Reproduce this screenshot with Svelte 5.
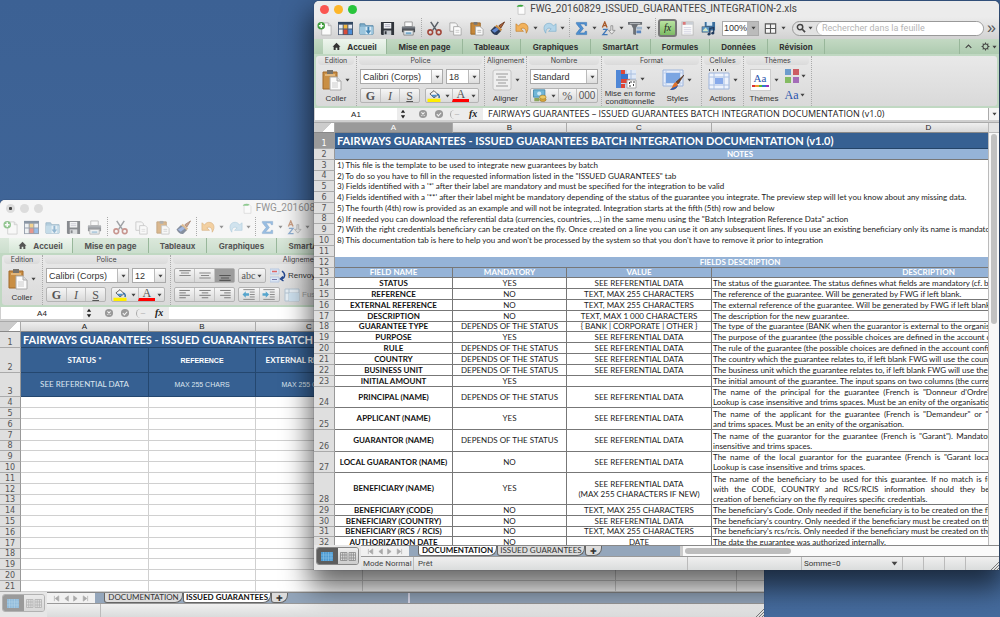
<script>
  const tabs = [
    { label: "Accueil", width: 64 },
    { label: "Mise en page", width: 76 },
    { label: "Tableaux", width: 58 },
    { label: "Graphiques", width: 70 },
    { label: "SmartArt", width: 60 },
    { label: "Formules", width: 59 },
    { label: "Données", width: 58 },
    { label: "Révision", width: 57 }
  ];

  const title = "FAIRWAYS GUARANTEES - ISSUED GUARANTEES BATCH INTEGRATION DOCUMENTATION (v1.0)";
  const ref = "SEE REFERENTIAL DATA";
  const depends = "DEPENDS OF THE STATUS";
  const text255 = "TEXT, MAX 255 CHARACTERS";

  const notes = [
    { h: 11, text: "1) This file is the template to be used to integrate new guarantees by batch" },
    { h: 10, text: '2) To do so you have to fill in the requested information listed in the "ISSUED GUARANTEES" tab' },
    { h: 11, text: "3) Fields identified with a '*' after their label are mandatory and must be specified for the integration to be valid" },
    { h: 11, text: "4) Fields identified with a '**' after their label might be mandatory depending of the status of the guarantee you integrate. The preview step will let you know about any missing data." },
    { h: 11, text: "5) The fourth (4th) row is provided as an example and will not be integrated. Integration starts at the fifth (5th) row and below" },
    { h: 10, text: '6) If needed you can download the referential data (currencies, countries, ...) in the same menu using the "Batch Integration Reference Data" action' },
    { h: 11, text: "7) With the right credentials beneficiary can be created on the fly. Once created on a line you can use it on any subsequent lines. If you use an existing beneficiary only its name is mandatory" },
    { h: 11, text: "8) This documentation tab is here to help you and won't be processed by the system so that you don't have to remove it prior to integration" },
    { h: 11, text: "" }
  ];

  const fields = [
    { h: 11, name: "STATUS", must: "YES", value: [ref], desc: ["The status of the guarantee. The status defines what fields are mandatory (cf. below)."] },
    { h: 11, name: "REFERENCE", must: "NO", value: [text255], desc: ["The reference of the guarantee. Will be generated by FWG if left blank."] },
    { h: 11, name: "EXTERNAL REFERENCE", must: "NO", value: [text255], desc: ["The external reference of the guarantee. Will be generated by FWG if left blank."] },
    { h: 11, name: "DESCRIPTION", must: "NO", value: ["TEXT, MAX 1 000 CHARACTERS"], desc: ["The description for the new guarantee."] },
    { h: 10, name: "GUARANTEE TYPE", must: depends, value: ["{ BANK | CORPORATE | OTHER }"], desc: ["The type of the guarantee (BANK when the guarantor is external to the organisation)."] },
    { h: 11, name: "PURPOSE", must: "YES", value: [ref], desc: ["The purpose of the guarantee (the possible choices are defined in the account configuration)."] },
    { h: 11, name: "RULE", must: depends, value: [ref], desc: ["The rule of the guarantee (the possible choices are defined in the account configuration)."] },
    { h: 11, name: "COUNTRY", must: depends, value: [ref], desc: ["The country which the guarantee relates to, if left blank FWG will use the country of the applicant."] },
    { h: 11, name: "BUSINESS UNIT", must: depends, value: [ref], desc: ["The business unit which the guarantee relates to, if left blank FWG will use the default one."] },
    { h: 11, name: "INITIAL AMOUNT", must: "YES", value: [""], desc: ["The initial amount of the guarantee. The input spans on two columns (the currency and the amount)."] },
    { h: 21, name: "PRINCIPAL (NAME)", must: depends, value: [ref], desc: ['The name of the principal for the guarantee (French is "Donneur d\'Ordre"). Mandatory if the guarantor is external.', "Lookup is case insensitive and trims spaces. Must be an enity of the organisation."] },
    { h: 22, name: "APPLICANT (NAME)", must: "YES", value: [ref], desc: ['The name of the applicant for the guarantee (French is "Demandeur" or "Postulant"). The lookup is case insensitive', "and trims spaces. Must be an enity of the organisation."] },
    { h: 22, name: "GUARANTOR (NAME)", must: depends, value: [ref], desc: ['The name of the guarantor for the guarantee (French is "Garant"). Mandatory if the type is BANK. The lookup is case', "insensitive and trims spaces."] },
    { h: 21, name: "LOCAL GUARANTOR (NAME)", must: "NO", value: [ref], desc: ['The name of the local guarantor for the guarantee (French is "Garant local"). Only needed when this one is known.', "Lookup is case insensitive and trims spaces."] },
    { h: 32, name: "BENEFICIARY (NAME)", must: "YES", value: [ref, "(MAX 255 CHARACTERS IF NEW)"], desc: ["The name of the beneficiary to be used for this guarantee. If no match is found a new one will be created on the fly", "with the CODE, COUNTRY and RCS/RCIS information should they be provided in the same row. Note that", "creation of beneficiary on the fly requires specific credentials."] },
    { h: 11, name: "BENEFICIARY (CODE)", must: "NO", value: [text255], desc: ["The beneficiary's Code. Only needed if the beneficiary is to be created on the fly."] },
    { h: 11, name: "BENEFICIARY (COUNTRY)", must: "NO", value: [ref], desc: ["The beneficiary's country. Only needed if the beneficiary must be created on the fly."] },
    { h: 10, name: "BENEFICIARY (RCS / RCIS)", must: "NO", value: [text255], desc: ["The beneficiary's rcs/rcis. Only needed if the beneficiary must be created on the fly."] },
    { h: 11, name: "AUTHORIZATION DATE", must: "NO", value: ["DATE"], desc: ["The date the guarantee was authorized internally."] }
  ];

  const docCols = [118, 114, 145, 434];
  const issuedCols = [128, 107, 107, 253, 121, 120];
  const emptyRows = Array.from({ length: 18 }, (_, i) => ({ n: i + 4, h: i % 5 === 4 ? 10 : 11 }));

  const letter = (i) => String.fromCharCode(65 + i);
  const total = (cols) => cols.reduce((a, b) => a + b, 21);
</script>

{#snippet caret()}
  <svg class="caret" viewBox="0 0 6 4" aria-hidden="true"><path d="M0.5 0.5h5L3 3.8z" /></svg>
{/snippet}

{#snippet icon(name)}
  <svg class="icon" viewBox="0 0 16 16" aria-hidden="true">
    {#if name === "new"}
      <path d="M5 2h7l3 3v10H5z" fill="#fbfbfb" stroke="#b5b5b5" />
      <path d="M12 2v3h3" fill="#ddd" stroke="#b5b5b5" />
      <circle cx="4.500" cy="5" r="4" fill="#3f9c3c" />
      <path d="M4.500 2.500v5M2 5h5" stroke="#fff" stroke-width="1.600" />
    {:else if name === "gallery"}
      <rect x="0" y="1" width="16" height="14" fill="#4a5a72" />
      <rect x="0" y="1" width="16" height="2" fill="#2f455f" />
      <path d="M1 4h4v4H1zM1 9h4v5H1z" fill="#e9edf2" />
      <path d="M6 4h4v4H6z" fill="#f2b63c" /><path d="M11 4h4v4h-4z" fill="#e3e9f2" />
      <path d="M6 9h4v5H6z" fill="#d94b3a" /><path d="M11 9h4v5h-4z" fill="#4f8fd9" />
    {:else if name === "open"}
      <path d="M1 3h5l1 2h8v9H1z" fill="#7faecb" stroke="#5b8aa9" />
      <path d="M1 6h14v8H1z" fill="#9cc5dd" />
      <path d="M7 6h6v8H7z" fill="#f5fafd" opacity=".7" />
      <path d="M9 6h2v4h2l-3 4-3-4h2z" fill="#4485b4" />
    {:else if name === "save"}
      <path d="M1 1h14v14H2l-1-1z" fill="#30343b" />
      <path d="M4 2h8v6H4z" fill="#f3f5f7" /><path d="M5 4h6M5 6h6" stroke="#aab" />
      <path d="M4 10h8v5H4z" fill="#c5c9ce" /><path d="M5 11h2v3H5z" fill="#30343b" />
    {:else if name === "print"}
      <path d="M4 1h8v5H4z" fill="#fafafa" stroke="#999" />
      <path d="M1 6h14v6H1z" fill="#4b4f55" /><path d="M1 6h14v2H1z" fill="#767b82" />
      <path d="M3 10h10v5H3z" fill="#e9eef2" stroke="#888" /><path d="M5 12h6v2H5z" fill="#79a9c9" />
    {:else if name === "cut"}
      <path d="M4 1l6 9M12 1L6 10" stroke="#5a5f66" stroke-width="1.600" />
      <circle cx="3.500" cy="12" r="2.500" fill="none" stroke="#a2473b" stroke-width="1.700" />
      <circle cx="12.500" cy="12" r="2.500" fill="none" stroke="#a2473b" stroke-width="1.700" />
    {:else if name === "copy"}
      <path d="M2 2h6l2 2v7H2z" fill="#f6f6f6" stroke="#aaa" />
      <path d="M6 6h6l2 2v7H6z" fill="#fcfcfc" stroke="#aaa" />
      <path d="M8 10h4M8 12h4" stroke="#ccc" />
    {:else if name === "paste"}
      <path d="M2 2h10v12H2z" fill="#c5873a" stroke="#9c6626" />
      <path d="M5 1h4v3H5z" fill="#777" />
      <path d="M7 6h5l3 3v6H7z" fill="#fafafa" stroke="#aaa" /><path d="M9 10h4M9 12h4" stroke="#bbb" />
    {:else if name === "brush"}
      <path d="M15.500 1l-6 4 2 2.500z" fill="#b0643a" stroke="#6d3b20" />
      <path d="M7 4l6 5-2 2.500-6-5z" fill="#c98d45" />
      <path d="M5 5.500l6.500 5.500-4 4c-3 .5-5.500-2-7-5z" fill="#2c3b58" /><path d="M2 10l5-3 2.500 2L5 12.500z" fill="#5f86cf" />
    {:else if name === "undo"}
      <path d="M1 3v8h8L6.200 8.400C9 6.500 12 8 12 13c4-6 1-11-4-10.500-1.700.2-3 .9-4.200 2.700z" fill="#f2b25c" stroke="#c07d29" stroke-width=".7" />
    {:else if name === "redo"}
      <path d="M15 3v8H7l2.800-2.600C7 6.500 4 8 4 13 0 7 3 2 8 2.500c1.700.2 3 .9 4.200 2.700z" fill="#b3d5e9" stroke="#7fb0cd" stroke-width=".7" />
    {:else if name === "sum"}
      <path d="M2.500 1.500h11v3.500h-1.500l-.8-1.700H6.500L10 8l-4 4.700h5.200l.8-1.700h1.500v3.500h-11V13l4-5-4-5z" fill="#4d8fd1" stroke="#2c69a8" stroke-width=".5" />
    {:else if name === "sort"}
      <path d="M1.500 7L4 1l2.500 6M2.500 5h3" fill="none" stroke="#a85a2a" stroke-width="1.400" />
      <path d="M2 9h4.500L2 14.500h5" fill="none" stroke="#3f77b8" stroke-width="1.400" />
      <path d="M10.500 5h2v5h2.500l-3.500 4L8 10h2.500z" fill="#e8e8e8" stroke="#777" stroke-width=".7" />
    {:else if name === "filter"}
      <path d="M0 1h15v3h-4.500l-2 4v7l-3-1V8l-2-4H0z" fill="#6c7075" /><path d="M2 2h11v1H2z" fill="#c8ccd0" />
      <path d="M9 6h6v3H9z" fill="#9fb5cc" /><path d="M9 10h5v3H9z" fill="#5a85bf" />
    {:else if name === "toolbox"}
      <rect x="2" y="1" width="12" height="14" fill="#fafafa" stroke="#bbb" />
      <path d="M2 1h12v3H2z" fill="#c9ced4" /><path d="M3 1h3v3H3z" fill="#d77" />
      <path d="M4 7h8M4 9h8M4 11h8M4 13h8" stroke="#ccd" stroke-width=".8" />
    {:else if name === "media"}
      <path d="M4 1h11v9H4z" fill="#3b6f9e" /><path d="M6 1h6v4H6z" fill="#d8e7f3" />
      <path d="M1 6h8v6H1z" fill="#5c96c6" stroke="#345" stroke-width=".5" /><path d="M2 10l3-3 3 4H2z" fill="#d5e9c8" />
      <path d="M9.500 14V8l4-1v6" fill="none" stroke="#213a5e" stroke-width="1.300" />
      <circle cx="8.500" cy="14" r="1.500" fill="#213a5e" /><circle cx="12.500" cy="13" r="1.500" fill="#213a5e" />
    {:else if name === "grid"}
      <path d="M2.500 3h11v10h-11zM8 3v10M2.500 8h11" fill="#f6f6f6" stroke="#555" stroke-width="1.200" />
    {:else if name === "home"}
      <path d="M8 1.500L1 8.500h2V14h3.500v-4h3v4H13V8.500h2z" fill="currentColor" />
    {:else if name === "gear"}
      <circle cx="8" cy="8" r="4.500" fill="none" stroke="#444" stroke-width="1.800" />
      <path d="M8 1v2.500M8 12.500V15M1 8h2.500M12.500 8H15M3 3l1.800 1.800M11.200 11.200L13 13M3 13l1.800-1.800M11.200 4.800L13 3" stroke="#444" stroke-width="1.800" />
    {:else if name === "up"}
      <path d="M3 10.500l5-5 5 5" fill="none" stroke="#444" stroke-width="2" />
    {:else if name === "search"}
      <circle cx="6.500" cy="6.500" r="4.300" fill="none" stroke="#444" stroke-width="2.400" />
      <path d="M10 10l4.500 4.500" stroke="#444" stroke-width="2.800" />
    {:else if name === "cancel"}
      <circle cx="8" cy="8" r="6.500" fill="#999" /><path d="M5.500 5.500l5 5M10.500 5.500l-5 5" stroke="#f2f2f2" stroke-width="1.700" />
    {:else if name === "check"}
      <circle cx="8" cy="8" r="6.500" fill="#999" /><path d="M4.500 8l2.500 3 4.500-5" fill="none" stroke="#f2f2f2" stroke-width="1.700" />
    {:else if name === "step"}
      <path d="M8 1l3.500 5h-7zM4.500 10h7L8 15z" fill="#222" />
    {:else if name === "fill"}
      <path d="M3 6l5-4 5 5-5 4z" fill="#f5f5f5" stroke="#444" /><path d="M4 7h8l-4 3.500z" fill="#4c8fcb" />
      <path d="M12 6c2 1 3 3 2 5" fill="none" stroke="#2c6aa6" stroke-width="1.700" />
      <path d="M0 12h16v4H0z" fill="#ffee00" />
    {:else if name === "left"}
      <path d="M1 3h13M1 6h8M1 9h13M1 12h8" stroke="#777" stroke-width="1.200" />
    {:else if name === "center"}
      <path d="M1 3h14M4 6h8M1 9h14M4 12h8" stroke="#777" stroke-width="1.200" />
    {:else if name === "right"}
      <path d="M2 3h13M7 6h8M2 9h13M7 12h8" stroke="#777" stroke-width="1.200" />
    {:else if name === "top"}
      <path d="M1 2h14M3 5h10M1 8h14" stroke="#888" stroke-width="1.300" />
    {:else if name === "middle"}
      <path d="M1 5h14M3 8h10M1 11h14" stroke="#888" stroke-width="1.300" />
    {:else if name === "bottom"}
      <path d="M1 8h14M3 11h10M1 14h14" stroke="#555" stroke-width="1.300" />
    {:else if name === "outdent" || name === "indent"}
      <path d="M1 2h14M9 5h6M9 8h6M9 11h6M1 14h14" stroke="#777" />
      {#if name === "outdent"}
        <path d="M0 8l4-4v2.500h4v3H4V12z" fill="#56a5cd" />
      {:else}
        <path d="M8 8L4 4v2.500H0v3h4V12z" fill="#56a5cd" />
      {/if}
    {:else if name === "wrap"}
      <path d="M0 1h9v5H0zM0 9h9v5H0z" fill="#dbe6f5" stroke="#b8c8e0" />
      <path d="M2 3.500h5" stroke="#d66" stroke-width="1.300" /><path d="M2 11.500h5" stroke="#77a" />
      <path d="M12 3c4 3 3 7 0 8M13 8.500L10.500 11l3 2" fill="none" stroke="#24488f" stroke-width="1.500" />
    {:else if name === "merge"}
      <path d="M1 2h14v12H1z" fill="#e8f0f6" stroke="#b4c5d3" /><path d="M1 6h14M5 2v12" stroke="#b4c5d3" />
      <path d="M5 6h10v8H5z" fill="#cfe2f0" />
    {:else if name === "money"}
      <path d="M0 1h14v9H0z" fill="#71b7d8" stroke="#3d84a8" /><circle cx="7" cy="5.500" r="2.500" fill="#cfeaf6" />
      <ellipse cx="11.500" cy="13" rx="4" ry="2.500" fill="#d5a53c" stroke="#8c671b" stroke-width=".6" />
      <ellipse cx="11.500" cy="10" rx="4" ry="2.500" fill="#edc964" stroke="#8c671b" stroke-width=".6" />
      <path d="M1 11h6v4H1z" fill="#8ba55c" />
    {:else if name === "file"}
      <path d="M3 2h7l3 3v10H3z" fill="#fdfdfd" stroke="#b9b9b9" />
      <path d="M1 4c1-3 6-4 10-2L9 4H4z" fill="#3aa63c" />
    {/if}
  </svg>
{/snippet}

{#snippet tool(name, label, drop = false)}
  <button class="tool" class:drop aria-label={label}>
    {@render icon(name)}
    {#if drop}{@render caret()}{/if}
  </button>
{/snippet}

{#snippet picker(label, value, size)}
  <label class="picker {size}">
    <select aria-label={label}><option>{value}</option></select>
    <span class="arrow">{@render caret()}</span>
  </label>
{/snippet}

{#snippet clipboard()}
  <section class="group edition">
    <h2>Edition</h2>
    <div class="big-row">
      <button class="big">
        <span class="glyph">
          <svg viewBox="0 0 20 22" width="20" height="22" aria-hidden="true">
            <path d="M1 3h14v17H1z" fill="#c98f45" stroke="#a1692a" />
            <path d="M3 5h10v2H3z" fill="#e2b77c" /><path d="M5 1h6v4H5z" fill="#77736c" />
            <path d="M8 8h7l4 4v9H8z" fill="#fbfbfb" stroke="#aaa" /><path d="M15 8v4h4" fill="#ddd" stroke="#aaa" />
            <path d="M10 14h6M10 16h6M10 18h6" stroke="#ccc" />
          </svg>
          {@render caret()}
        </span>
        <span>Coller</span>
      </button>
    </div>
  </section>
{/snippet}

{#snippet police(size)}
  <section class="group police">
    <h2>Police</h2>
    <div class="line">
      {@render picker("Police", "Calibri (Corps)", "wide")}
      {@render picker("Taille", size, "small")}
    </div>
    <div class="line">
      <div class="segment gis">
        <button><b>G</b></button><button><i>I</i></button><button><u>S</u></button>
      </div>
      <div class="segment paint">
        <button aria-label="Remplissage">{@render icon("fill")}</button>
        <button class="thin" aria-label="Autres remplissages">{@render caret()}</button>
        <button class="ink">A</button>
        <button class="thin" aria-label="Autres couleurs">{@render caret()}</button>
      </div>
    </div>
  </section>
{/snippet}

{#snippet chrome(front)}
  <header class="titlebar">
    <div class="lights">
      <button class="red" aria-label="Fermer"></button>
      <button class="amber" aria-label="Réduire"></button>
      <button class="green" aria-label="Agrandir"></button>
    </div>
    <h1>{@render icon("file")}FWG_20160829_ISSUED_GUARANTEES_INTEGRATION-2.xls</h1>
  </header>

  <div class="toolbar">
    {@render tool("new", "Nouveau")}
    {@render tool("gallery", "Galerie")}
    {@render tool("open", "Ouvrir")}
    {@render tool("save", "Enregistrer")}
    {@render tool("print", "Imprimer")}
    <span class="sep"></span>
    {@render tool("cut", "Couper")}
    {@render tool("copy", "Copier")}
    {@render tool("paste", "Coller")}
    {@render tool("brush", "Reproduire")}
    <span class="sep"></span>
    {@render tool("undo", "Annuler", true)}
    {@render tool("redo", "Rétablir", true)}
    <span class="sep"></span>
    {@render tool("sum", "Somme", true)}
    {@render tool("sort", "Trier", true)}
    {@render tool("filter", "Filtrer", true)}
    <span class="sep"></span>
    <button class="fx">fx</button>
    {@render tool("toolbox", "Boîte à outils")}
    {@render tool("media", "Média")}
    {@render picker("Zoom", "100%", "zoom")}
    {@render tool("grid", "Affichage", true)}
    <label class="search">
      {@render icon("search")}{@render caret()}
      <input type="search" placeholder="Rechercher dans la feuille" aria-label="Rechercher" />
    </label>
    <span class="more">»</span>
  </div>

  <nav class="tabs">
    {#each tabs as tab, i}
      <button class:active={i === 0} style="width: {tab.width}px">
        {#if i === 0}{@render icon("home")}{/if}{tab.label}
      </button>
    {/each}
    <div class="tab-tools">
      {@render icon("up")}{@render icon("gear")}{@render caret()}
    </div>
  </nav>

  <div class="ribbon">
    <div class="panel">
      {@render clipboard()}
      {@render police(front ? "18" : "12")}
      {#if front}
        <section class="group align">
          <h2>Alignement</h2>
          <div class="big-row">
            <button class="big">
              <span class="glyph">
                <svg viewBox="0 0 20 22" width="20" height="22" aria-hidden="true">
                  <rect x="1" y="1" width="18" height="20" rx="2" fill="#efefef" stroke="#c4c4c4" />
                  <path d="M4 5h12M6 8h8M4 11h12M6 14h8M4 17h12" stroke="#999" />
                </svg>
                {@render caret()}
              </span>
              <span>Aligner</span>
            </button>
          </div>
        </section>
        <section class="group number">
          <h2>Nombre</h2>
          <div class="line">{@render picker("Format de nombre", "Standard", "standard")}</div>
          <div class="line">
            <div class="segment digits">
              <button aria-label="Monétaire">{@render icon("money")}</button>
              <button class="thin" aria-label="Autres devises">{@render caret()}</button>
              <button>%</button><button>000</button>
            </div>
          </div>
        </section>
        <section class="group format">
          <h2>Format</h2>
          <div class="big-row">
            <button class="big two-lines">
              <span class="glyph">
                <svg viewBox="0 0 22 20" width="22" height="20" aria-hidden="true">
                  <path d="M1 1h20v18H1z" fill="#dfe9f7" /><path d="M1 5h20M1 10h20M1 15h20M11 1v18M16 1v18" stroke="#a9bfe0" />
                  <path d="M1 1h5v18H1z" fill="#4f87d6" /><path d="M6 1h4v4H6zM6 10h9v4H6z" fill="#de4637" />
                  <path d="M6 5h7v5H6z" fill="#3a73cc" /><path d="M6 15h4v4H6z" fill="#de4637" />
                  <path d="M12 11h9v8h-9z" fill="#fff" stroke="#aaa" /><path d="M17 13h-2l-1 1 1 1M20 13h-2M14 17h2M18 15l1 1-1 1" stroke="#444" fill="none" />
                </svg>
                {@render caret()}
              </span>
              <span>Mise en forme<br />conditionnelle</span>
            </button>
            <button class="big">
              <span class="glyph">
                <svg viewBox="0 0 22 22" width="22" height="22" aria-hidden="true">
                  <path d="M1 1h20v16H1z" fill="#e6eefb" stroke="#9db4db" /><path d="M4 1v16M18 1v16M1 4h20M1 14h20" stroke="#bccdea" />
                  <path d="M4 4h14v10H4z" fill="#7ba5e2" />
                  <path d="M22 6l-8 7 2 2z" fill="#7b4a2a" stroke="#4a2a16" stroke-width=".6" />
                  <path d="M14 13l2 3c-1 4-4 5-8 5 3-2 2-6 6-8z" fill="#e0702a" /><path d="M10 19c2-1 4-1 6-3-1 4-4 5-8 5z" fill="#2d5db0" />
                </svg>
                {@render caret()}
              </span>
              <span>Styles</span>
            </button>
          </div>
        </section>
        <section class="group cells">
          <h2>Cellules</h2>
          <div class="big-row">
            <button class="big">
              <span class="glyph">
                <svg viewBox="0 0 22 22" width="22" height="22" aria-hidden="true">
                  <path d="M1 1h20" stroke="#555" stroke-width="2" stroke-dasharray="1 3" />
                  <path d="M1 4h20v16H1z" fill="#eef3fc" stroke="#9db4db" /><path d="M6 4v16M16 4v16M1 8h20M1 16h20" stroke="#aac0e4" />
                  <path d="M7 9h8v6H7z" fill="#86a9ea" />
                </svg>
                {@render caret()}
              </span>
              <span>Actions</span>
            </button>
          </div>
        </section>
        <section class="group themes">
          <h2>Thèmes</h2>
          <div class="big-row">
            <button class="big">
              <span class="glyph">
                <span class="theme-page">Aa<i class="dots"></i></span>
                {@render caret()}
              </span>
              <span>Thèmes</span>
            </button>
            <div class="theme-side">
              <button aria-label="Couleurs">
                <svg viewBox="0 0 14 14" width="14" height="14" aria-hidden="true">
                  <path d="M0 0h6v6H0z" fill="#6d9ccc" /><path d="M8 0h6v6H8z" fill="#cc5d64" />
                  <path d="M0 8h6v6H0z" fill="#84bb62" /><path d="M8 8h6v6H8z" fill="#a46cb8" />
                </svg>
                {@render caret()}
              </button>
              <button class="fonts">Aa{@render caret()}</button>
            </div>
          </div>
        </section>
      {:else}
        <section class="group align-wide">
          <h2>Alignement</h2>
          <div class="line">
            <div class="segment three">
              <button aria-label="Haut">{@render icon("top")}</button>
              <button aria-label="Milieu">{@render icon("middle")}</button>
              <button class="pressed" aria-label="Bas">{@render icon("bottom")}</button>
            </div>
            <div class="segment abc"><button>abc{@render caret()}</button></div>
            <button class="plain">{@render icon("wrap")}Renvoyer</button>
          </div>
          <div class="line">
            <div class="segment three">
              <button aria-label="Gauche">{@render icon("left")}</button>
              <button aria-label="Centre">{@render icon("center")}</button>
              <button aria-label="Droite">{@render icon("right")}</button>
            </div>
            <div class="segment two">
              <button aria-label="Diminuer le retrait">{@render icon("outdent")}</button>
              <button aria-label="Augmenter le retrait">{@render icon("indent")}</button>
            </div>
            <button class="plain" disabled>{@render icon("merge")}Fusionner</button>
          </div>
        </section>
      {/if}
    </div>
  </div>

  <div class="formula">
    <input class="name-box" value={front ? "A1" : "A4"} aria-label="Zone de nom" />
    <div class="formula-tools">
      {@render icon("step")}{@render icon("cancel")}{@render icon("check")}
      <span class="pill">–</span>
      <i>fx</i>
    </div>
    <input class="formula-text" value={front ? title.replace("-", "–") : ""} aria-label="Formule" />
    <span class="formula-drop">{@render caret()}</span>
  </div>
{/snippet}

{#snippet columns(cols, selected)}
  <colgroup>
    <col class="head-col" />
    {#each cols as width}<col style="width: {width}px" />{/each}
  </colgroup>
  <thead>
    <tr>
      <td class="corner"></td>
      {#each cols as _, i}<th class:selected={i === selected}>{letter(i)}</th>{/each}
    </tr>
  </thead>
{/snippet}

{#snippet bottom(front)}
  <footer>
    <div class="views">
      <button class="on" aria-label="Mode Normal">
        <svg viewBox="0 0 12 9" width="12" height="9" aria-hidden="true"><path d="M0 0h12v9H0z" fill="#4e9bd3" /><path d="M2.500 0v9M5 0v9M7.500 0v9M10 0v9M0 3h12M0 6h12" stroke="#8cc3e8" stroke-width=".6" /></svg>
      </button>
      <button aria-label="Mode Page">
        <svg viewBox="0 0 16 9" width="16" height="9" aria-hidden="true"><path d="M.5 .5h6.500v8H.5zM9 .5h6.500v8H9zM2.700 .5v8M4.900 .5v8M11.200 .5v8M13.400 .5v8M.5 3h6.500M.5 6h6.500M9 3h6.500M9 6h6.500" fill="#ddd" stroke="#888" stroke-width=".8" /></svg>
      </button>
    </div>
    <div class="sheets">
      <div class="arrows">
        <svg viewBox="0 0 42 8" width="40" height="7" aria-hidden="true">
          <path d="M2 1v6M7 1L3 4l4 3zM18 1l-4 3 4 3zM24 1l4 3-4 3zM35 1l4 3-4 3zM40 1v6" fill="#aaa" stroke="#aaa" stroke-width=".8" />
        </svg>
      </div>
      <button class="sheet first" class:current={front}>DOCUMENTATION</button>
      <button class="sheet" class:current={!front}>ISSUED GUARANTEES</button>
      <button class="sheet plus">✚</button>
      {#if front}
        <div class="hscroll"><span></span></div>
      {:else}
        <span class="notch"></span>
      {/if}
    </div>
    <div class="status">
      {#if front}
        <span class="mode">Mode Normal</span>
        <span class="ready">Prêt</span>
        <span class="spare"></span>
        <span class="sum">Somme=0{@render caret()}</span>
        <span class="cell"></span><span class="cell"></span><span class="cell"></span>
        <span class="cell last"></span>
      {:else}
        <span class="mode"></span>
      {/if}
      <svg class="grip" viewBox="0 0 8 8" width="8" height="8" aria-hidden="true"><path d="M0 8l8-8M3 8l5-5M6 8l2-2" stroke="#777" /></svg>
    </div>
  </footer>
{/snippet}

<main class="desktop">
  <div class="window back">
    {@render chrome(false)}
    <div class="sheet-area">
      <div class="cells-view">
        <table style="width: {total(issuedCols)}px">
          {@render columns(issuedCols, -1)}
          <tbody>
            <tr class="title"><th class="row">1</th><td colspan="6">{title}</td></tr>
            <tr class="names">
              <th class="row">2</th>
              <td>STATUS *</td><td class="alt">REFERENCE</td><td>EXTERNAL REFERENCE</td><td></td><td></td><td></td>
            </tr>
            <tr class="hints">
              <th class="row">3</th>
              <td>SEE REFERENTIAL DATA</td><td class="alt">MAX 255 CHARS</td><td class="alt">MAX 255 CHARS</td><td></td><td></td><td></td>
            </tr>
            {#each emptyRows as row}
              <tr class="empty" style="height: {row.h}px">
                <th class="row">{row.n}</th>
                {#each issuedCols as _}<td></td>{/each}
              </tr>
            {/each}
          </tbody>
        </table>
      </div>
    </div>
    {@render bottom(false)}
  </div>

  <div class="window front">
    {@render chrome(true)}
    <div class="sheet-area">
      <div class="cells-view">
        <table style="width: {total(docCols)}px">
          {@render columns(docCols, 0)}
          <tbody>
            <tr class="title"><th class="row selected">1</th><td colspan="4">{title}</td></tr>
            <tr class="band"><th class="row">2</th><td colspan="4">NOTES</td></tr>
            {#each notes as note, i}
              <tr class="note" style="height: {note.h}px"><th class="row">{i + 3}</th><td colspan="4">{note.text}</td></tr>
            {/each}
            <tr class="band"><th class="row">12</th><td colspan="4">FIELDS DESCRIPTION</td></tr>
            <tr class="band tight">
              <th class="row">13</th><td>FIELD NAME</td><td>MANDATORY</td><td>VALUE</td><td>DESCRIPTION</td>
            </tr>
            {#each fields as field, i}
              <tr class="field" style="height: {field.h}px">
                <th class="row">{i + 14}</th>
                <td class="name">{field.name}</td>
                <td>{field.must}</td>
                <td>{#each field.value as text}<p>{text}</p>{/each}</td>
                <td class="desc">{#each field.desc as text}<p>{text}</p>{/each}</td>
              </tr>
            {/each}
          </tbody>
        </table>
      </div>
      <div class="vscroll"><i></i><span></span></div>
    </div>
    {@render bottom(true)}
  </div>
</main>

<style>
  :global(body) {
    margin: 0;
  }
  .desktop {
    position: relative;
    height: 100vh;
    overflow: hidden;
    background: linear-gradient(#3c6194, #456b9d);
    font-family: "Liberation Sans", sans-serif;
    font-size: 8px;
    color: #222;
  }
  button,
  input,
  select {
    margin: 0;
    padding: 0;
    border: 0;
    background: none;
    font: inherit;
    color: inherit;
    min-width: 0;
    outline: 0;
    white-space: nowrap;
    box-sizing: border-box;
  }
  h1,
  h2,
  p {
    margin: 0;
    font-weight: normal;
  }
  .icon {
    width: 16px;
    height: 16px;
    flex: none;
  }
  .caret {
    width: 5px;
    height: 4px;
    flex: none;
    fill: #444;
  }

  /* windows */
  .window {
    position: absolute;
    display: flex;
    flex-direction: column;
    border-radius: 5px 5px 0 0;
    overflow: hidden;
    background: #dcdcdc;
  }
  .back {
    top: 200px;
    left: 0;
    bottom: 0;
    width: 764px;
    box-shadow: 0 0 1px #223;
  }
  .front {
    top: 1px;
    right: 1px;
    bottom: 47px;
    left: 314px;
    box-shadow: 0 0 1px #223, 0 14px 28px 4px rgba(0, 0, 0, 0.6);
  }

  .titlebar {
    flex: none;
    display: grid;
    grid-template-columns: 50px 1fr 50px;
    align-items: center;
    height: 16px;
    background: #ececec;
  }
  .lights {
    display: flex;
    gap: 5px;
    padding-left: 6px;
  }
  .lights button {
    width: 9px;
    height: 9px;
    border-radius: 50%;
  }
  .red { background: #fb5651; }
  .amber { background: #fdb629; }
  .green { background: #29c53c; }
  .titlebar h1 {
    display: flex;
    justify-content: center;
    align-items: center;
    gap: 3px;
    font: 10px/12px Roboto, sans-serif;
    color: #444;
  }
  .titlebar .icon {
    width: 11px;
    height: 11px;
  }

  .toolbar {
    flex: none;
    display: flex;
    align-items: center;
    height: 22px;
    background: linear-gradient(#ececec, #d2d2d2);
    overflow: hidden;
  }
  .tool {
    flex: none;
    display: flex;
    align-items: center;
    justify-content: center;
    width: 21px;
    height: 20px;
  }
  .tool.drop {
    width: 27px;
    gap: 3px;
  }
  .tool .icon {
    width: 15px;
    height: 15px;
  }
  .sep {
    flex: none;
    align-self: stretch;
    width: 1px;
    margin: 1px 2px 2px;
    border-left: 1px dotted #aaa;
    box-sizing: border-box;
  }
  .fx {
    flex: none;
    width: 19px;
    height: 18px;
    border: 2px solid #777;
    border-radius: 3px;
    background: linear-gradient(#b9e3a0, #7dbb65);
    font: italic 10px/12px "Liberation Serif", serif;
  }
  .picker {
    flex: none;
    display: flex;
    height: 15px;
    border: 1px solid #aaa;
    background: #fff;
    box-sizing: border-box;
  }
  .picker select {
    flex: 1;
    appearance: none;
    padding-left: 2px;
    font-size: 9px;
    color: #333;
  }
  .arrow {
    display: flex;
    align-items: center;
    justify-content: center;
    width: 10px;
    border-left: 1px solid #bbb;
    background: linear-gradient(#fff, #ddd);
  }
  .zoom { width: 37px; margin: 0 2px 0 3px; }
  .zoom .arrow { background: #bbb; }
  .zoom select { padding-left: 1px; }
  .wide { width: 83px; }
  .small { width: 34px; }
  .standard { width: 68px; }
  .search {
    flex: 1;
    display: flex;
    align-items: center;
    height: 15px;
    margin-left: 4px;
    padding-left: 3px;
    gap: 2px;
    border: 1px solid #999;
    border-radius: 8px;
    background: #e2e2e2;
    box-sizing: border-box;
  }
  .search .icon {
    width: 10px;
    height: 10px;
  }
  .search input {
    flex: 1;
    height: 13px;
    margin-left: 1px;
    padding-left: 5px;
    border-left: 1px solid #aaa;
    border-radius: 7px;
    background: #fff;
    font: 9px/13px Roboto, sans-serif;
    appearance: none;
  }
  .search input::placeholder {
    color: #b5b5b5;
  }
  .more {
    width: 15px;
    text-align: center;
    font-size: 16px;
    line-height: 16px;
    color: #555;
  }

  .tabs {
    flex: none;
    display: flex;
    height: 15px;
    padding-left: 9px;
    background: linear-gradient(#c3d9c3, #aecbb0);
    overflow: hidden;
  }
  .tabs button {
    flex: none;
    display: flex;
    align-items: center;
    justify-content: center;
    gap: 6px;
    border-right: 1px solid #98b79a;
    font: bold 8px/14px Inter, sans-serif;
    color: #333;
  }
  .tabs .active {
    background: linear-gradient(#eef5ee, #d5e6d6);
  }
  .tabs .icon {
    width: 9px;
    height: 9px;
  }
  .tab-tools {
    display: flex;
    align-items: center;
    gap: 2px;
    margin-left: auto;
    padding: 0 2px 0 4px;
    border-left: 1px solid #98b79a;
  }
  .tab-tools .icon:nth-child(2) {
    margin-left: 6px;
  }

  .ribbon {
    flex: none;
    height: 54px;
    padding: 2px;
    background: #c0d8c2;
    box-sizing: border-box;
  }
  .panel {
    display: flex;
    height: 50px;
    border-radius: 3px;
    background: linear-gradient(#e9e9e9, #d9d9d9);
    overflow: hidden;
  }
  .group {
    flex: none;
    border-right: 1px dotted #aaa;
    box-sizing: border-box;
    color: #333;
  }
  .group h2 {
    height: 9px;
    margin: 0 2px 4px;
    border-radius: 4px;
    background: linear-gradient(#eaeaea, #dadada);
    font: 7px/9px Inter, sans-serif;
    text-align: center;
    color: #444;
  }
  .edition { width: 41px; }
  .police { width: 128px; }
  .align { width: 42px; }
  .number { width: 75px; }
  .format { width: 100px; }
  .cells { width: 42px; }
  .themes { width: 68px; }
  .align-wide { width: 262px; }
  .line {
    display: flex;
    gap: 3px;
    height: 15px;
    margin: 0 0 4px 3px;
  }
  .line + .line {
    gap: 5px;
  }
  .align-wide .line {
    gap: 3px;
  }
  .segment {
    display: flex;
    height: 15px;
    border: 1px solid #b4b4b4;
    border-radius: 2px;
    background: linear-gradient(#f6f6f6, #d9d9d9);
    box-sizing: border-box;
  }
  .segment button {
    flex: 1;
    display: flex;
    align-items: center;
    justify-content: center;
    border-left: 1px solid #c3c3c3;
    font: 12px/12px "Liberation Serif", serif;
    color: #555;
  }
  .segment button:first-child {
    border-left: 0;
  }
  .segment .thin {
    flex: 0 0 9px;
    border-left: 0;
  }
  .segment .icon {
    width: 14px;
    height: 13px;
  }
  .segment .pressed {
    background: #9c9c9c;
  }
  .gis { width: 60px; }
  .paint { width: 54px; }
  .segment .ink {
    border-bottom: 3px solid #f00;
    line-height: 9px;
  }
  .digits { width: 68px; }
  .digits button:last-child {
    flex: 0 0 21px;
    font: 10px/12px "Liberation Sans", sans-serif;
  }
  .three { width: 61px; }
  .segment.abc { width: 28px; }
  .two { width: 42px; }
  .segment.abc button {
    gap: 2px;
    font-size: 10px;
  }
  .plain {
    display: flex;
    align-items: center;
    gap: 2px;
    margin-left: 1px;
  }
  .plain:disabled {
    color: #999;
  }
  .big-row {
    display: flex;
    justify-content: center;
    align-items: flex-start;
  }
  .big {
    display: flex;
    flex-direction: column;
    align-items: center;
    gap: 4px;
    font-size: 8px;
    line-height: 8px;
  }
  .big.two-lines {
    gap: 1px;
  }
  .glyph {
    display: flex;
    align-items: center;
    gap: 3px;
  }
  .format .big-row {
    gap: 7px;
    padding-right: 6px;
  }
  .theme-page {
    width: 21px;
    height: 22px;
    padding-top: 3px;
    border: 1px solid #ccc;
    background: #fff;
    font: 11px/10px "Liberation Serif", serif;
    color: #2a55ad;
    box-sizing: border-box;
  }
  .dots {
    display: block;
    height: 2px;
    margin: 2px 1px;
    background: linear-gradient(90deg, #d33 20%, #e93 20% 40%, #5b3 40% 60%, #37c 60% 80%, #93b 80%);
  }
  .theme-side {
    display: flex;
    flex-direction: column;
    gap: 6px;
    margin-left: 6px;
  }
  .theme-side button {
    display: flex;
    align-items: center;
    gap: 2px;
  }
  .theme-side .fonts {
    gap: 1px;
    font: 12px/12px "Liberation Serif", serif;
    color: #2a55ad;
  }

  .formula {
    flex: none;
    display: flex;
    height: 15px;
    padding: 0 0 2px 1px;
    border-bottom: 1px solid #aaa;
    background: #cfcfcf;
    box-sizing: border-box;
  }
  .formula input {
    height: 12px;
    background: #fff;
  }
  .name-box {
    width: 82px;
    text-align: center;
  }
  .formula-tools {
    flex: none;
    display: flex;
    align-items: center;
    gap: 6px;
    width: 86px;
    padding-left: 1px;
    background: #ececec;
    box-sizing: border-box;
  }
  .formula-tools .icon {
    width: 10px;
    height: 10px;
  }
  .formula-tools .icon:first-child {
    margin-right: 4px;
  }
  .pill {
    width: 12px;
    height: 9px;
    border-left: 1px solid #aaa;
    border-radius: 5px;
    line-height: 8px;
    text-align: center;
    color: #aaa;
  }
  .formula-tools i {
    font: italic bold 10px/10px "Liberation Serif", serif;
  }
  .formula .formula-text {
    flex: 1;
    padding-left: 5px;
    font: 9px/12px "Open Sans", sans-serif;
  }
  .formula-drop {
    display: flex;
    align-items: center;
    justify-content: center;
    width: 11px;
    background: #f4f4f4;
    border-left: 1px solid #aaa;
    box-sizing: border-box;
  }

  /* cells */
  .sheet-area {
    flex: 1;
    display: flex;
    min-height: 0;
    background: #fff;
  }
  .cells-view {
    flex: 1;
    min-width: 0;
    overflow: hidden;
  }
  table {
    table-layout: fixed;
    border-spacing: 0;
    font: 8px/9px Lato, sans-serif;
    color: #222;
  }
  .head-col {
    width: 21px;
  }
  th,
  td {
    padding: 0;
    border: 0 solid #777;
    overflow: hidden;
    white-space: nowrap;
    text-align: center;
  }
  thead th,
  .corner {
    height: 9px;
    border-right: 1px solid #aaa;
    border-bottom: 1px solid #888;
    background: linear-gradient(#efefef, #d8d8d8);
    font: 8px/9px "Liberation Sans", sans-serif;
  }
  .corner {
    background: linear-gradient(135deg, #ccc 60%, #fff 60%);
  }
  .row {
    border-right: 1px solid #999;
    border-bottom: 1px solid #aaa;
    background: #dfdfdf;
    font: 8px/9px "DejaVu Sans", sans-serif;
    color: #555;
    vertical-align: bottom;
  }
  th.selected {
    background: #9a9a9a;
    color: #fff;
  }
  .title { height: 16px; }
  .title td {
    padding-left: 2px;
    border-bottom-width: 1px;
    border-color: #244468;
    background: #366092;
    font-size: 11px;
    line-height: 14px;
    font-weight: bold;
    text-align: left;
    color: #fff;
  }
  .band { height: 11px; }
  .band.tight { height: 10px; }
  .band td {
    border-width: 0 1px 1px 0;
    background: #95b3d7;
    font-weight: bold;
    color: #fff;
  }
  .note td {
    text-align: left;
    padding-left: 2px;
  }
  .field td {
    border-width: 0 1px 1px 0;
  }
  .field p {
    line-height: 10px;
  }
  .field p:only-child {
    line-height: 9px;
  }
  .field .name {
    font-weight: bold;
    color: #111;
  }
  .field .desc {
    padding: 0 2px 0 1px;
    text-align: left;
  }
  .desc p:not(:last-child) {
    text-align-last: justify;
  }
  .names { height: 25px; }
  .hints { height: 24px; }
  .names td,
  .hints td {
    border-width: 0 1px 1px 0;
    border-color: #24476f;
    background: #366092;
    color: #dde6f0;
  }
  .names td {
    font-weight: bold;
    color: #fff;
  }
  .names .alt,
  .hints .alt {
    font-family: "Liberation Sans", sans-serif;
    font-size: 7px;
  }
  .empty td {
    border-width: 0 1px 1px 0;
    border-color: #d0d0d0;
  }
  .vscroll {
    width: 11px;
    border-left: 1px solid #bbb;
    background: #f8f8f8;
    box-sizing: border-box;
  }
  .vscroll i {
    display: block;
    height: 9px;
    background: #e4e4e4;
    border-bottom: 1px solid #bbb;
  }
  .vscroll span {
    display: block;
    width: 6px;
    height: 45%;
    margin: 1px auto;
    border-radius: 3px;
    background: #c1c1c1;
  }

  /* sheet tabs and status bar */
  footer {
    flex: none;
    display: grid;
    grid-template-columns: 47px 1fr;
    grid-template-rows: 12px 13px;
    background: #e6e6e6;
  }
  .views {
    grid-row: span 2;
    display: flex;
    margin: 2px 2px 5px;
    border: 1px solid #888;
    border-radius: 3px;
    overflow: hidden;
  }
  .views button {
    flex: 1;
    display: flex;
    align-items: center;
    justify-content: center;
    background: linear-gradient(#eee, #ccc);
  }
  .views .on {
    background: #5d5d5d;
  }
  .sheets {
    display: flex;
    border-top: 1px solid #888;
    border-bottom: 1px solid #999;
    background: #94a6bb;
    min-width: 0;
    box-sizing: border-box;
  }
  .arrows {
    display: flex;
    align-items: center;
    justify-content: center;
    width: 48px;
    margin-right: 9px;
    background: #f1f1f1;
  }
  .sheet {
    flex: none;
    width: 88px;
    height: 10px;
    border: 1px solid #666;
    border-top: 0;
    border-radius: 0 0 8px 3px;
    background: #dcdcdc;
    font: 8px/9px Lato, sans-serif;
    color: #333;
  }
  .first {
    width: 79px;
  }
  .current {
    background: #fff;
    font-weight: bold;
    color: #111;
  }
  .plus {
    width: 17px;
    line-height: 8px;
  }
  .hscroll {
    flex: 0 0 319px;
    margin-left: auto;
    border-left: 3px solid #ccc;
    background: #fafafa;
    box-sizing: border-box;
  }
  .hscroll span {
    display: block;
    width: 106px;
    height: 6px;
    margin: 2px;
    border-radius: 3px;
    background: #bdbdbd;
  }
  .notch {
    width: 2px;
    margin-left: 120px;
    background: #dde;
  }
  .status {
    display: flex;
    background: linear-gradient(#f0f0f0, #dadcdc);
    font: 8px/13px Roboto, sans-serif;
    color: #444;
  }
  .status span {
    border-right: 1px solid #bbb;
    box-sizing: border-box;
  }
  .mode {
    width: 53px;
    padding-left: 2px;
    white-space: nowrap;
  }
  .ready {
    flex: 1;
    padding-left: 4px;
  }
  .spare { width: 114px; }
  .status .sum {
    display: flex;
    align-items: center;
    justify-content: space-between;
    width: 101px;
    padding: 0 4px 0 2px;
    color: #333;
  }
  .sum .caret {
    width: 7px;
    height: 5px;
  }
  .cell { width: 21px; }
  .status .last {
    width: 25px;
    border: 0;
  }
  .grip {
    align-self: flex-end;
    margin-left: auto;
  }
  .back .mode {
    width: 54px;
  }

  /* window without focus */
  .back .titlebar,
  .back .toolbar {
    background: #f6f6f6;
  }
  .back .titlebar h1,
  .back .tool,
  .back .views {
    opacity: 0.55;
  }
  .back .lights button {
    background: #dcdcdc;
  }
  .back .lights .red {
    background: radial-gradient(#444 20%, #dcdcdc 30%);
  }
  .back .tabs {
    background: linear-gradient(#dbe8db, #cbdecd);
  }
  .back .tabs button {
    color: #555;
  }
</style>
